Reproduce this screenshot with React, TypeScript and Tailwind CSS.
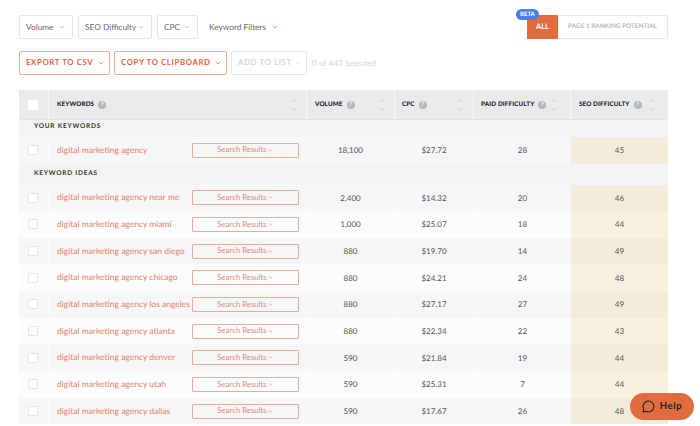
import { ChevronDown, ChevronUp, MessageCircle } from "lucide-react";

const rows = [
  ["digital marketing agency near me", "2,400", "$14.32", "20", "46"],
  ["digital marketing agency miami", "1,000", "$25.07", "18", "44"],
  ["digital marketing agency san diego", "880", "$19.70", "14", "49"],
  ["digital marketing agency chicago", "880", "$24.21", "24", "48"],
  ["digital marketing agency los angeles", "880", "$27.17", "27", "49"],
  ["digital marketing agency atlanta", "880", "$22.34", "22", "43"],
  ["digital marketing agency denver", "590", "$21.84", "19", "44"],
  ["digital marketing agency utah", "590", "$25.31", "7", "44"],
  ["digital marketing agency dallas", "590", "$17.67", "26", "48"],
];

function Hint() {
  return (
    <span className="flex h-2 w-2 shrink-0 items-center justify-center rounded-full bg-[#b5b8ba] text-[6px] font-bold leading-none text-white">
      ?
    </span>
  );
}

function Sort() {
  return (
    <span className="flex shrink-0 flex-col text-[#b4b8ba]">
      <ChevronUp size={9} strokeWidth={1.5} />
      <ChevronDown size={9} strokeWidth={1.5} />
    </span>
  );
}

function Filter({ label, width }: { label: string; width: string }) {
  return (
    <button className={`flex h-6 items-center justify-between whitespace-nowrap rounded-[2px] border border-[#e4e6e8] bg-white pl-1.5 pr-1.5 text-[8.3px] text-[#666] ${width}`}>
      {label}
      <ChevronDown size={8} className="text-[#aaa]" />
    </button>
  );
}

function Action({ label, width, off }: { label: string; width: string; off?: boolean }) {
  return (
    <button
      className={`flex h-6 items-center justify-between whitespace-nowrap rounded-[2px] border pl-[6px] pr-1 text-[7.8px] font-bold tracking-[0.08em] ${width} ${
        off ? "border-[#e6e7e9] text-[#d4d6d8]" : "border-[#eeaa95] text-[#e2623a]"
      }`}
    >
      {label}
      <ChevronDown size={8} />
    </button>
  );
}

function Row({ name, volume, cpc, paid, seo, odd, tall }: { name: string; volume: string; cpc: string; paid: string; seo: string; odd: boolean; tall?: boolean }) {
  return (
    <div className={`flex text-[8px] text-[#555] ${tall ? "h-[26.5px]" : "h-[26.67px]"} ${odd ? "bg-[#f5f6f8]" : "bg-[#fbfcfe]"}`}>
      <div className="flex w-[30px] shrink-0 items-center justify-center border-r border-white/60">
        <span className="ml-[-1px] h-[10px] w-[10px] rounded-[1px] border border-[#e4e5e7] bg-white" />
      </div>
      <div className="flex w-[258px] shrink-0 items-center justify-between border-r border-white/60 pl-[8px] pr-[7px]">
        <span className="whitespace-nowrap text-[8.5px] text-[#e57f63]">{name}</span>
        <button className="flex h-[15px] w-[107px] shrink-0 items-center justify-center rounded-[1px] border border-[#eeaa95] text-[7.8px] text-[#e88a70]">
          Search Results
          <ChevronDown size={7} />
        </button>
      </div>
      <div className="flex w-[88px] shrink-0 items-center justify-center border-r border-white/60">{volume}</div>
      <div className="flex w-[79px] shrink-0 items-center justify-center border-r border-white/60">{cpc}</div>
      <div className="flex w-[97px] shrink-0 items-center justify-center">{paid}</div>
      <div className={`flex flex-1 items-center justify-center ${odd ? "bg-[#f3ebda]" : "bg-[#f7f0e0]"}`}>{seo}</div>
    </div>
  );
}

export default function App() {
  return (
    <div className="relative h-[426px] w-[700px] overflow-hidden bg-white font-['Lato',sans-serif] [text-rendering:geometricPrecision]">
      <div className="w-[687px] pl-[19px] pt-[15px]">
        <div className="flex h-6 w-[649px] items-center">
          <div className="flex gap-[5px]">
            <Filter label="Volume" width="w-[54px]" />
            <Filter label="SEO Difficulty" width="w-[74px]" />
            <Filter label="CPC" width="w-[41px]" />
          </div>
          <span className="ml-[11px] text-[8.3px] text-[#666]">Keyword Filters</span>
          <ChevronDown size={8} className="ml-[5px] text-[#e2623a]" />
          <div className="relative ml-auto flex h-6">
            <span className="absolute left-[-11px] top-[-6px] rounded-full bg-[#4a80e8] px-1 py-px text-[6px] font-bold leading-[9px] text-white">BETA</span>
            <span className="flex w-[31px] items-center justify-center bg-[#e26c40] text-[7.5px] font-bold text-white">ALL</span>
            <span className="flex w-[110px] items-center justify-center whitespace-nowrap rounded-r-[2px] border border-l-0 border-[#e4e6e8] text-[6.4px] font-bold text-[#b4b8bd]">PAGE 1 RANKING POTENTIAL</span>
          </div>
        </div>
        <div className="mt-3 flex h-6 items-center gap-1">
          <Action label="EXPORT TO CSV" width="w-[91px]" />
          <Action label="COPY TO CLIPBOARD" width="w-[113px]" />
          <Action label="ADD TO LIST" width="w-[76px]" off />
          <span className="ml-px text-[8.3px] text-[#d4d6d8]">0 of 443 Selected</span>
        </div>
        <div className="mt-[15px] w-[649px]">
          <div className="flex h-[30px] whitespace-nowrap border-b border-[#dfe1e3] bg-[#e8eaec] text-[6.3px] font-black tracking-[0.02em] text-[#222]">
            <div className="flex w-[30px] shrink-0 items-center justify-center border-r border-white/60">
              <span className="ml-[-1px] h-[10px] w-[10px] rounded-[1px] bg-white" />
            </div>
            <div className="flex w-[258px] shrink-0 items-center gap-1 border-r border-white/60 pl-[8px] pr-[8px]">
              KEYWORDS <Hint />
              <span className="ml-auto"><Sort /></span>
            </div>
            <div className="flex w-[88px] shrink-0 items-center gap-1 border-r border-white/60 pl-[8px] pr-[8px]">
              VOLUME <Hint />
              <span className="ml-auto"><Sort /></span>
            </div>
            <div className="flex w-[79px] shrink-0 items-center gap-1 border-r border-white/60 pl-[7px] pr-[8px]">
              CPC <Hint />
              <span className="ml-auto"><Sort /></span>
            </div>
            <div className="flex w-[97px] shrink-0 items-center gap-1 border-r border-white/60 pl-[7px] pr-[11px]">
              PAID DIFFICULTY <Hint />
              <span className="ml-auto"><Sort /></span>
            </div>
            <div className="flex flex-1 items-center gap-1 pl-[8px] pr-[11px]">
              SEO DIFFICULTY <Hint />
              <span className="ml-auto"><Sort /></span>
            </div>
          </div>
          <div className="flex h-[17px] items-center bg-[#f1f3f5] pb-[3px] pl-[15px] text-[6.5px] font-bold tracking-[0.12em] text-[#333]">YOUR KEYWORDS</div>
          <Row name="digital marketing agency" volume="18,100" cpc="$27.72" paid="28" seo="45" odd tall />
          <div className="flex h-[21px] items-center bg-[#f1f3f5] pl-[15px] text-[6.5px] font-bold tracking-[0.12em] text-[#333]">KEYWORD IDEAS</div>
          {rows.map((r, i) => (
            <Row key={r[0]} name={r[0]} volume={r[1]} cpc={r[2]} paid={r[3]} seo={r[4]} odd={i % 2 === 0} />
          ))}
        </div>
      </div>
      <button className="absolute left-[630px] top-[393px] flex h-[27px] w-[64px] items-center justify-center gap-[5px] rounded-full bg-[#e26c40] text-[9.5px] font-bold tracking-[0.06em] text-[#222]">
        <MessageCircle size={13} strokeWidth={2} />
        Help
      </button>
    </div>
  );
}
